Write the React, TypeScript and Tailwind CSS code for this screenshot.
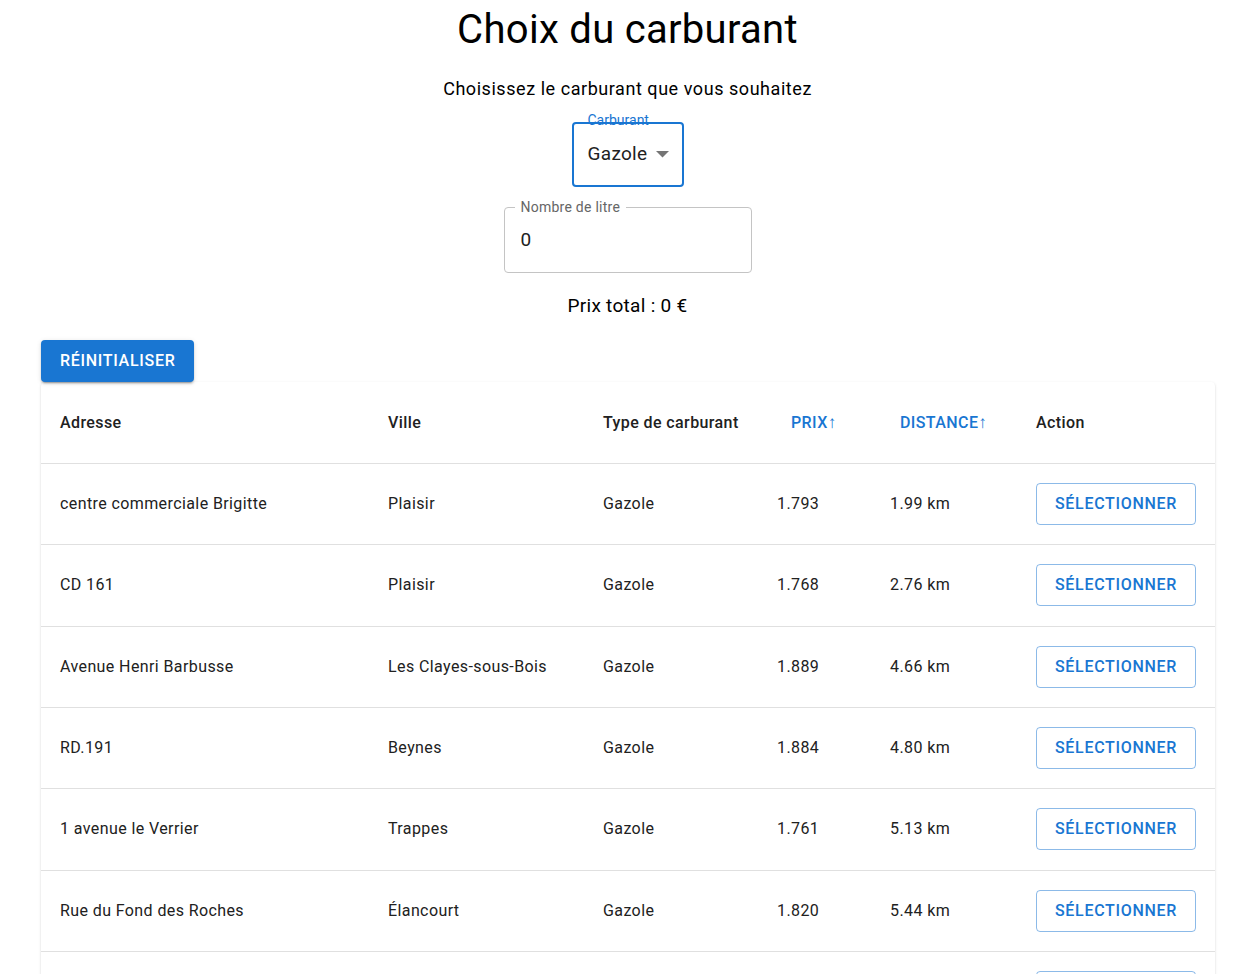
import React, { useState } from "react";

type Station = {
  adresse: string;
  ville: string;
  carburant: string;
  prix: string;
  distance: string;
};

const stations: Station[] = [
  { adresse: "centre commerciale Brigitte", ville: "Plaisir", carburant: "Gazole", prix: "1.793", distance: "1.99 km" },
  { adresse: "CD 161", ville: "Plaisir", carburant: "Gazole", prix: "1.768", distance: "2.76 km" },
  { adresse: "Avenue Henri Barbusse", ville: "Les Clayes-sous-Bois", carburant: "Gazole", prix: "1.889", distance: "4.66 km" },
  { adresse: "RD.191", ville: "Beynes", carburant: "Gazole", prix: "1.884", distance: "4.80 km" },
  { adresse: "1 avenue le Verrier", ville: "Trappes", carburant: "Gazole", prix: "1.761", distance: "5.13 km" },
  { adresse: "Rue du Fond des Roches", ville: "Élancourt", carburant: "Gazole", prix: "1.820", distance: "5.44 km" },
  { adresse: "Route de Dreux", ville: "Neauphle-le-Château", carburant: "Gazole", prix: "1.857", distance: "5.92 km" },
];

const cols = "grid grid-cols-[328px_215px_174px_113px_146px_198px]";

const App = () => {
  const [litres, setLitres] = useState("0");

  return (
    <div className="min-h-screen bg-white font-['Roboto',sans-serif] text-[#212121]">
      {/* header + form */}
      <div className="flex flex-col items-center pl-[2px]">
        <h1 className="mt-[4px] text-[40px] leading-[52px] font-normal tracking-[0.3px] text-black">Choix du carburant</h1>
        <p className="mt-[21px] text-[18px] leading-[24px] tracking-[0.55px] text-black">Choisissez le carburant que vous souhaitez</p>

        {/* select */}
        <div className="relative mt-[21px] w-[112px] h-[65px] border-2 border-[#1976d2] rounded-[4px] flex items-center pl-[14px]">
          <span className="absolute -top-[11px] left-[14px] text-[14px] leading-[14px] text-[#1976d2]">Carburant</span>
          <span className="text-[19px] tracking-[0.3px]">Gazole</span>
          <svg className="ml-[9px]" width="13" height="7" viewBox="0 0 13 7">
            <path d="M0 0 L13 0 L6.5 6.5 Z" fill="#757575" />
          </svg>
        </div>

        {/* litres */}
        <div className="relative mt-[20px] w-[248px] h-[66px] border border-[#c4c4c4] rounded-[4px] flex items-center pl-[16px]">
          <span className="absolute -top-[9px] left-[10px] bg-white px-[6px] text-[14px] leading-[16px] tracking-[0.25px] text-[#666666]">Nombre de litre</span>
          <input
            value={litres}
            onChange={(e) => setLitres(e.target.value)}
            className="w-full text-[19px] outline-none bg-transparent"
          />
        </div>

        <p className="mt-[21px] text-[19px] leading-[24px] tracking-[0.3px] text-black">Prix total : 0 €</p>
      </div>

      {/* reset button */}
      <div className="px-[41px] mt-[22px]">
        <button className="h-[42px] px-[19px] bg-[#1976d2] text-white text-[16px] font-medium tracking-[0.7px] rounded-[4px] shadow-[0_3px_1px_-2px_rgba(0,0,0,0.2),0_2px_2px_0_rgba(0,0,0,0.14),0_1px_5px_0_rgba(0,0,0,0.12)]">
          RÉINITIALISER
        </button>
      </div>

      {/* table */}
      <div className="ml-[41px] w-[1174px] rounded-[4px] bg-white tracking-[0.4px] shadow-[0_2px_1px_-1px_rgba(0,0,0,0.2),0_1px_1px_0_rgba(0,0,0,0.14),0_1px_3px_0_rgba(0,0,0,0.12)]">
        <div className={`${cols} h-[82px] items-center border-b border-[#e0e0e0] text-[16px] font-medium`}>
          <div className="pl-[19px]">Adresse</div>
          <div className="pl-[19px]">Ville</div>
          <div className="pl-[19px]">Type de carburant</div>
          <div className="pl-[33px] text-[#1976d2]">PRIX<span className="text-[17px]">↑</span></div>
          <div className="pl-[29px] text-[#1976d2]">DISTANCE<span className="text-[17px]">↑</span></div>
          <div className="pl-[19px]">Action</div>
        </div>
        {stations.map((s, i) => (
          <div key={i} className={`${cols} h-[81.33px] items-center border-b border-[#e0e0e0] text-[16px]`}>
            <div className="pl-[19px]">{s.adresse}</div>
            <div className="pl-[19px]">{s.ville}</div>
            <div className="pl-[19px]">{s.carburant}</div>
            <div className="pl-[19px]">{s.prix}</div>
            <div className="pl-[19px]">{s.distance}</div>
            <div className="pl-[19px]">
              <button className="h-[42px] w-[160px] border border-[#1976d2]/50 rounded-[4px] text-[#1976d2] text-[16px] font-medium tracking-[0.7px]">
                SÉLECTIONNER
              </button>
            </div>
          </div>
        ))}
      </div>
    </div>
  );
};

export default App;
